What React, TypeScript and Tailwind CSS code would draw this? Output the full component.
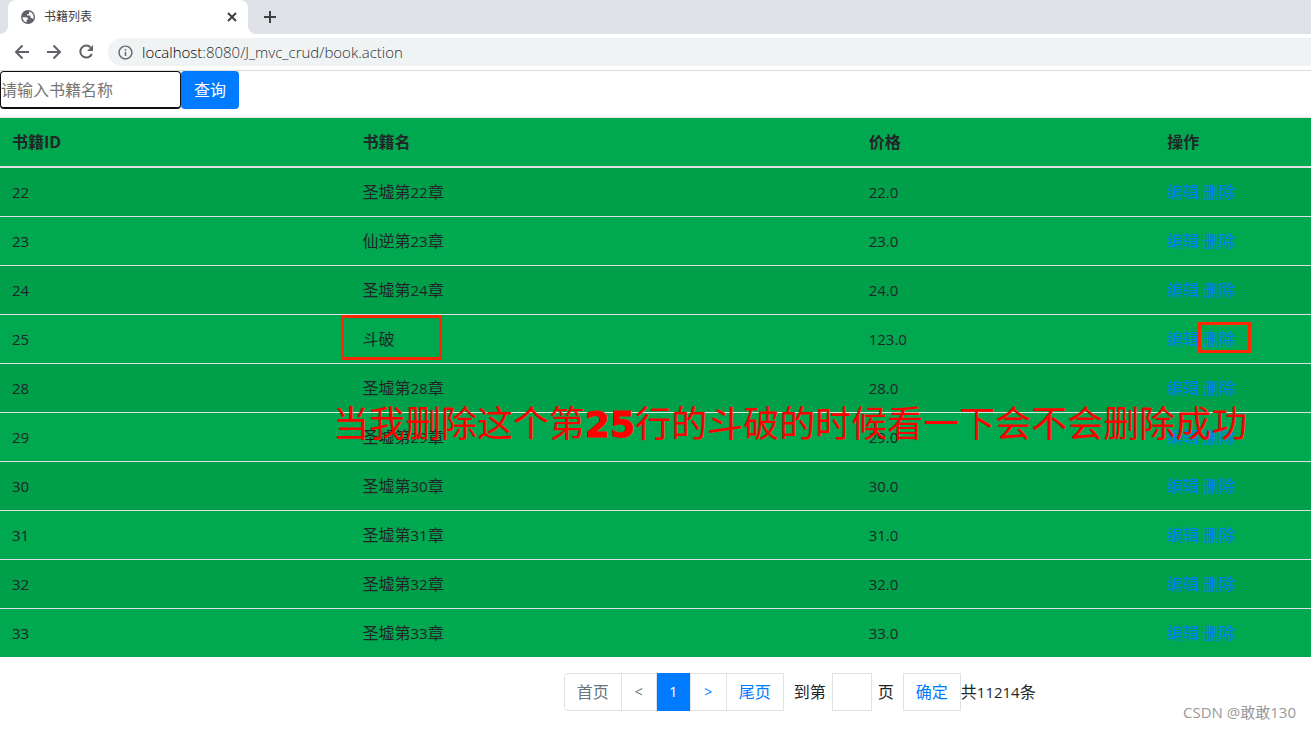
import React, { useState } from "react";
import { MdInfoOutline } from "react-icons/md";

interface Book {
     id: number
     name: string
     chapter: string
     price: string
}

const initialBooks: Book[] = [
     {id: 22, name: '圣墟', chapter: '22', price: '22.0'},
     {id: 23, name: '仙逆', chapter: '23', price: '23.0'},
     {id: 24, name: '圣墟', chapter: '24', price: '24.0'},
     {id: 25, name: '斗破', chapter: '', price: '123.0'},
     {id: 28, name: '圣墟', chapter: '28', price: '28.0'},
     {id: 29, name: '圣墟', chapter: '29', price: '29.0'},
     {id: 30, name: '圣墟', chapter: '30', price: '30.0'},
     {id: 31, name: '圣墟', chapter: '31', price: '31.0'},
     {id: 32, name: '圣墟', chapter: '32', price: '32.0'},
     {id: 33, name: '圣墟', chapter: '33', price: '33.0'},
]

const GlobeIcon: React.FC = () => (
     <svg className="h-4 w-4" viewBox="0 0 16 16">
          <circle cx="8" cy="8" r="7" fill="#5f6368"/>
          <path d="M2.4 8.2h3.4c1.6 0 2.6 1 2.6 2.4H6.6v2.6C4.2 12.8 2.5 10.8 2.4 8.2z" fill="#fff"/>
          <path d="M9.2 2.6c2.6.6 4.4 2.8 4.4 5.4 0 .9-.2 1.7-.5 2.4-.4-.9-1-1.3-1.8-1.3h-.8V7.5c0-.6-.4-.9-.9-.9H7V5.2h1.3c.6 0 .9-.4.9-.9z" fill="#fff"/>
     </svg>
)

interface LineIconProps {
     d: string
}

const LineIcon: React.FC<LineIconProps> = ({d}) => (
     <svg className="h-5 w-5" viewBox="0 0 20 20" fill="none" stroke="currentColor" strokeWidth="2"><path d={d}/></svg>
)

const BrowserBar: React.FC = () => {
     return(
          <header>
               {/* Tabs */}
               <div className="flex h-[34px] items-end bg-[#dee1e6]">
                    <svg className="h-2 w-2" viewBox="0 0 8 8" fill="#fff"><path d="M8 0v8H0a8 8 0 0 0 8-8z"/></svg>
                    <div className="flex h-full w-60 items-center rounded-t-lg bg-white pl-3 pr-1.5 text-xs text-[#3c4043]">
                         <GlobeIcon/>
                         <span className="ml-2 flex-1">书籍列表</span>
                         <button aria-label="关闭"><LineIcon d="M6 6l8 8M14 6l-8 8"/></button>
                    </div>
                    <svg className="h-2 w-2" viewBox="0 0 8 8" fill="#fff"><path d="M0 0v8h8a8 8 0 0 1-8-8z"/></svg>
                    <button aria-label="新标签页" className="flex h-full items-center pl-1 text-[#3c4043]"><LineIcon d="M10 4v12M4 10h12"/></button>
               </div>
               {/* Address */}
               <div className="flex h-[37px] items-center border-b border-[#dadce0] bg-white pl-3 text-[#5f6368]">
                    <nav className="flex gap-3">
                         <button aria-label="后退" className="block"><LineIcon d="M17 10H4.5M10.5 3.5L4 10l6.5 6.5"/></button>
                         <button aria-label="前进" className="block"><LineIcon d="M3 10h12.5M9.5 3.5L16 10l-6.5 6.5"/></button>
                         <button aria-label="刷新" className="block">
                              <svg className="h-5 w-5" viewBox="0 0 20 20">
                                   <path d="M14.6 5.4A6 6 0 1 0 15.800 12" fill="none" stroke="currentColor" strokeWidth="2"/>
                                   <path d="M17 3v6h-6z" fill="currentColor"/>
                              </svg>
                         </button>
                    </nav>
                    <div className="ml-3 flex h-7 flex-1 items-center rounded-l-full bg-[#eff3f4] pl-[9px] text-[15px] font-light">
                         <MdInfoOutline size={17}/>
                         <span className="ml-2 text-[#2c3033]"><span className="text-black">localhost</span>:8080/J_mvc_crud/book.action</span>
                    </div>
               </div>
          </header>
     )
}

interface BookTableProps {
     books: Book[]
}

const BookTable: React.FC<BookTableProps> = ({books}) => {
     return(
          <table className="w-full table-fixed border-collapse border-t border-[#dee2e6] bg-[#00a84f] text-left">
               <thead>
                    <tr className="h-[49px] border-b-2 border-[#dee2e6]">
                         <th className="w-[27%] px-3">书籍ID</th>
                         <th className="w-[39%] px-3">书籍名</th>
                         <th className="w-[23%] px-3">价格</th>
                         <th className="w-[12%] px-3">操作</th>
                    </tr>
               </thead>
               <tbody>
                    {books.map((book) => (
                         <tr key={book.id} className="h-[49px] border-t border-[#dee2e6] odd:bg-[#00a04b] first:h-[50px] last:h-12">
                              <td className="px-3 text-[15px]">{book.id}</td>
                              <td className="px-3">
                                   {book.name}
                                   {book.chapter && <>第<span className="text-[15px]">{book.chapter}</span>章</>}
                              </td>
                              <td className="px-3 text-[15px]">{book.price}</td>
                              <td className="px-3 text-[#007bff]">
                                   <a href="#edit">编辑</a> <a href="#delete">删除</a>
                              </td>
                         </tr>
                    ))}
               </tbody>
          </table>
     )
}

const Pagination: React.FC = () => {
     const [page, setPage] = useState('')

     return(
          <div className="mt-4 flex items-center pl-[43%]">
               <nav className="flex h-[38px] items-stretch divide-x divide-[#dee2e6] rounded-l border border-[#dee2e6] text-[#007bff]">
                    <a href="#first" className="flex items-center px-3 text-[#6c757d]">首页</a>
                    <a href="#prev" className="flex w-[35px] items-center justify-center text-sm text-[#6c757d]">&lt;</a>
                    <a href="#1" className="-my-px flex w-[34px] items-center justify-center bg-[#007bff] text-[15px] text-white">1</a>
                    <a href="#next" className="flex w-9 items-center justify-center text-sm">&gt;</a>
                    <a href="#last" className="flex items-center px-3">尾页</a>
               </nav>
               <label htmlFor="page" className="ml-2.5 mr-1.5">到第</label>
               <input
                    id="page"
                    value={page}
                    onChange={(e) => setPage(e.target.value)}
                    className="h-[38px] w-10 border border-[#dee2e6] px-2"
               />
               <span className="ml-1.5 mr-[9px]">页</span>
               <button className="h-[38px] border border-[#dee2e6] px-3 text-[#007bff]">确定</button>
               <span>共<span className="text-[15px]">11214</span>条</span>
          </div>
     )
}

const App: React.FC = () => {
     const [keyword, setKeyword] = useState('')

     return(
          <div className="relative min-h-screen overflow-hidden bg-white font-['Open_Sans','Noto_Sans_CJK_SC',sans-serif] text-base text-[#212529]">
               <BrowserBar/>
               <main>
                    <form className="mb-2 flex" onSubmit={(e) => e.preventDefault()}>
                         <input
                              aria-label="书籍名称"
                              placeholder="请输入书籍名称"
                              value={keyword}
                              onChange={(e) => setKeyword(e.target.value)}
                              className="h-[38px] w-[181px] rounded-sm border border-b-2 border-[#101010] placeholder:text-[#757575]"
                         />
                         <button type="submit" className="h-[38px] rounded bg-[#007bff] px-[13px] text-white">查询</button>
                    </form>
                    <BookTable books={initialBooks}/>
                    <Pagination/>
               </main>

               {/* Notes drawn over the page */}
               <div className="absolute left-[341px] top-[315px] h-[45px] w-[101px] border-3 border-[#ff2600]"/>
               <div className="absolute left-[1198px] top-[322px] h-[31px] w-[53px] border-3 border-[#ff2600]"/>
               <p className="absolute left-[333px] top-[397px] whitespace-nowrap text-4xl leading-[54px] text-[#ff0000]">
                    当我删除这个第<b className="font-['DejaVu_Sans'] font-black [-webkit-text-stroke:1px_#ff0000]">25</b>行的斗破的时候看一下会不会删除成功
               </p>
               <span className="absolute bottom-[7px] right-[15px] text-[15px] text-[#999]">CSDN @敢敢130</span>
          </div>
     )
}
export default App
